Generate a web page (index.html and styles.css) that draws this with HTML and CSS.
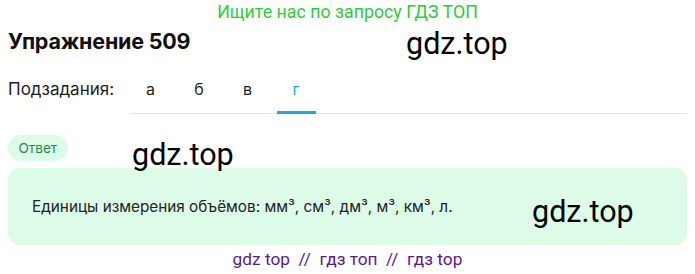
FILE: index.html
```html
<!DOCTYPE html>
<html lang="ru">
<head>
<meta charset="utf-8">
<link rel="stylesheet" href="styles.css">
</head>
<body>
<div class="page">
  <div class="promo">Ищите нас по запросу ГДЗ ТОП</div>
  <div class="header">
    <h1 class="title">Упражнение 509</h1>
    <span class="wm wm-head">gdz.top</span>
  </div>
  <div class="subtasks">
    <span class="sub-label">Подзадания:</span>
    <div class="tabs">
      <span class="tab">а</span>
      <span class="tab">б</span>
      <span class="tab">в</span>
      <span class="tab active">г</span>
    </div>
  </div>
  <div class="answer-head">
    <span class="pill">Ответ</span>
    <span class="wm wm-pill">gdz.top</span>
  </div>
  <div class="answer">
    <p class="answer-text">Единицы измерения объёмов: мм³, см³, дм³, м³, км³, л.</p>
    <span class="wm wm-box">gdz.top</span>
  </div>
  <div class="footer">gdz top &nbsp;//&nbsp; гдз топ &nbsp;//&nbsp; гдз top</div>
</div>
</body>
</html>
```

FILE: styles.css
```css
* { box-sizing: border-box; }
html, body { margin: 0; padding: 0; background: #fff; }
body { font-family: Inter, "Noto Sans", sans-serif; color: #1d1d1f; }
.page { width: 695px; padding: 0 8px; }
.promo {
  font-family: Roboto, sans-serif;
  font-size: 17.8px;
  color: #2fcc3c;
  text-align: center;
  height: 24px;
  line-height: 24px;
}
.header { position: relative; height: 40px; display: flex; align-items: center; padding-bottom: 6px; }
.title { margin: 0; font-size: 21.5px; font-weight: 700; letter-spacing: -0.2px; color: #111; }
.wm { position: absolute; z-index: 2; font-family: Roboto, sans-serif; font-size: 30.5px; color: #000; line-height: 1; }
.wm-head { left: 398px; top: 5px; }
.subtasks { display: flex; align-items: stretch; height: 48px; margin-top: 2px; }
.sub-label { font-size: 17px; width: 122px; display: flex; align-items: center; padding-bottom: 2px; }
.tabs { flex: 1; display: flex; gap: 9.5px; padding-left: 1px; border-bottom: 1px solid #e6e6e6; }
.tab { width: 39px; display: flex; align-items: center; justify-content: center; font-size: 16px; padding-bottom: 2px; }
.tab.active { color: #29a3e0; border-bottom: 3px solid #29a3e0; margin-bottom: -1px; padding-bottom: 0; }
.answer-head { position: relative; margin-top: 21px; height: 26px; }
.pill {
  display: inline-block;
  background: #dcfce7;
  color: #1f8a47;
  font-size: 13.5px;
  height: 26px;
  line-height: 26px;
  padding: 0 10.5px;
  border-radius: 13px;
}
.wm-pill { left: 124px; top: 5px; }
.answer {
  position: relative;
  margin-top: 7px;
  background: #dcfce7;
  border-radius: 12px;
  height: 77px;
  display: flex;
  align-items: center;
  padding: 0 24px;
}
.answer-text { margin: 0; font-size: 15.3px; color: #222; }
.wm-box { left: 524px; top: 29px; }
.footer {
  font-family: Roboto, sans-serif;
  font-size: 17.3px;
  color: #5b1a8c;
  text-align: center;
  margin-top: 4px;
}
```
